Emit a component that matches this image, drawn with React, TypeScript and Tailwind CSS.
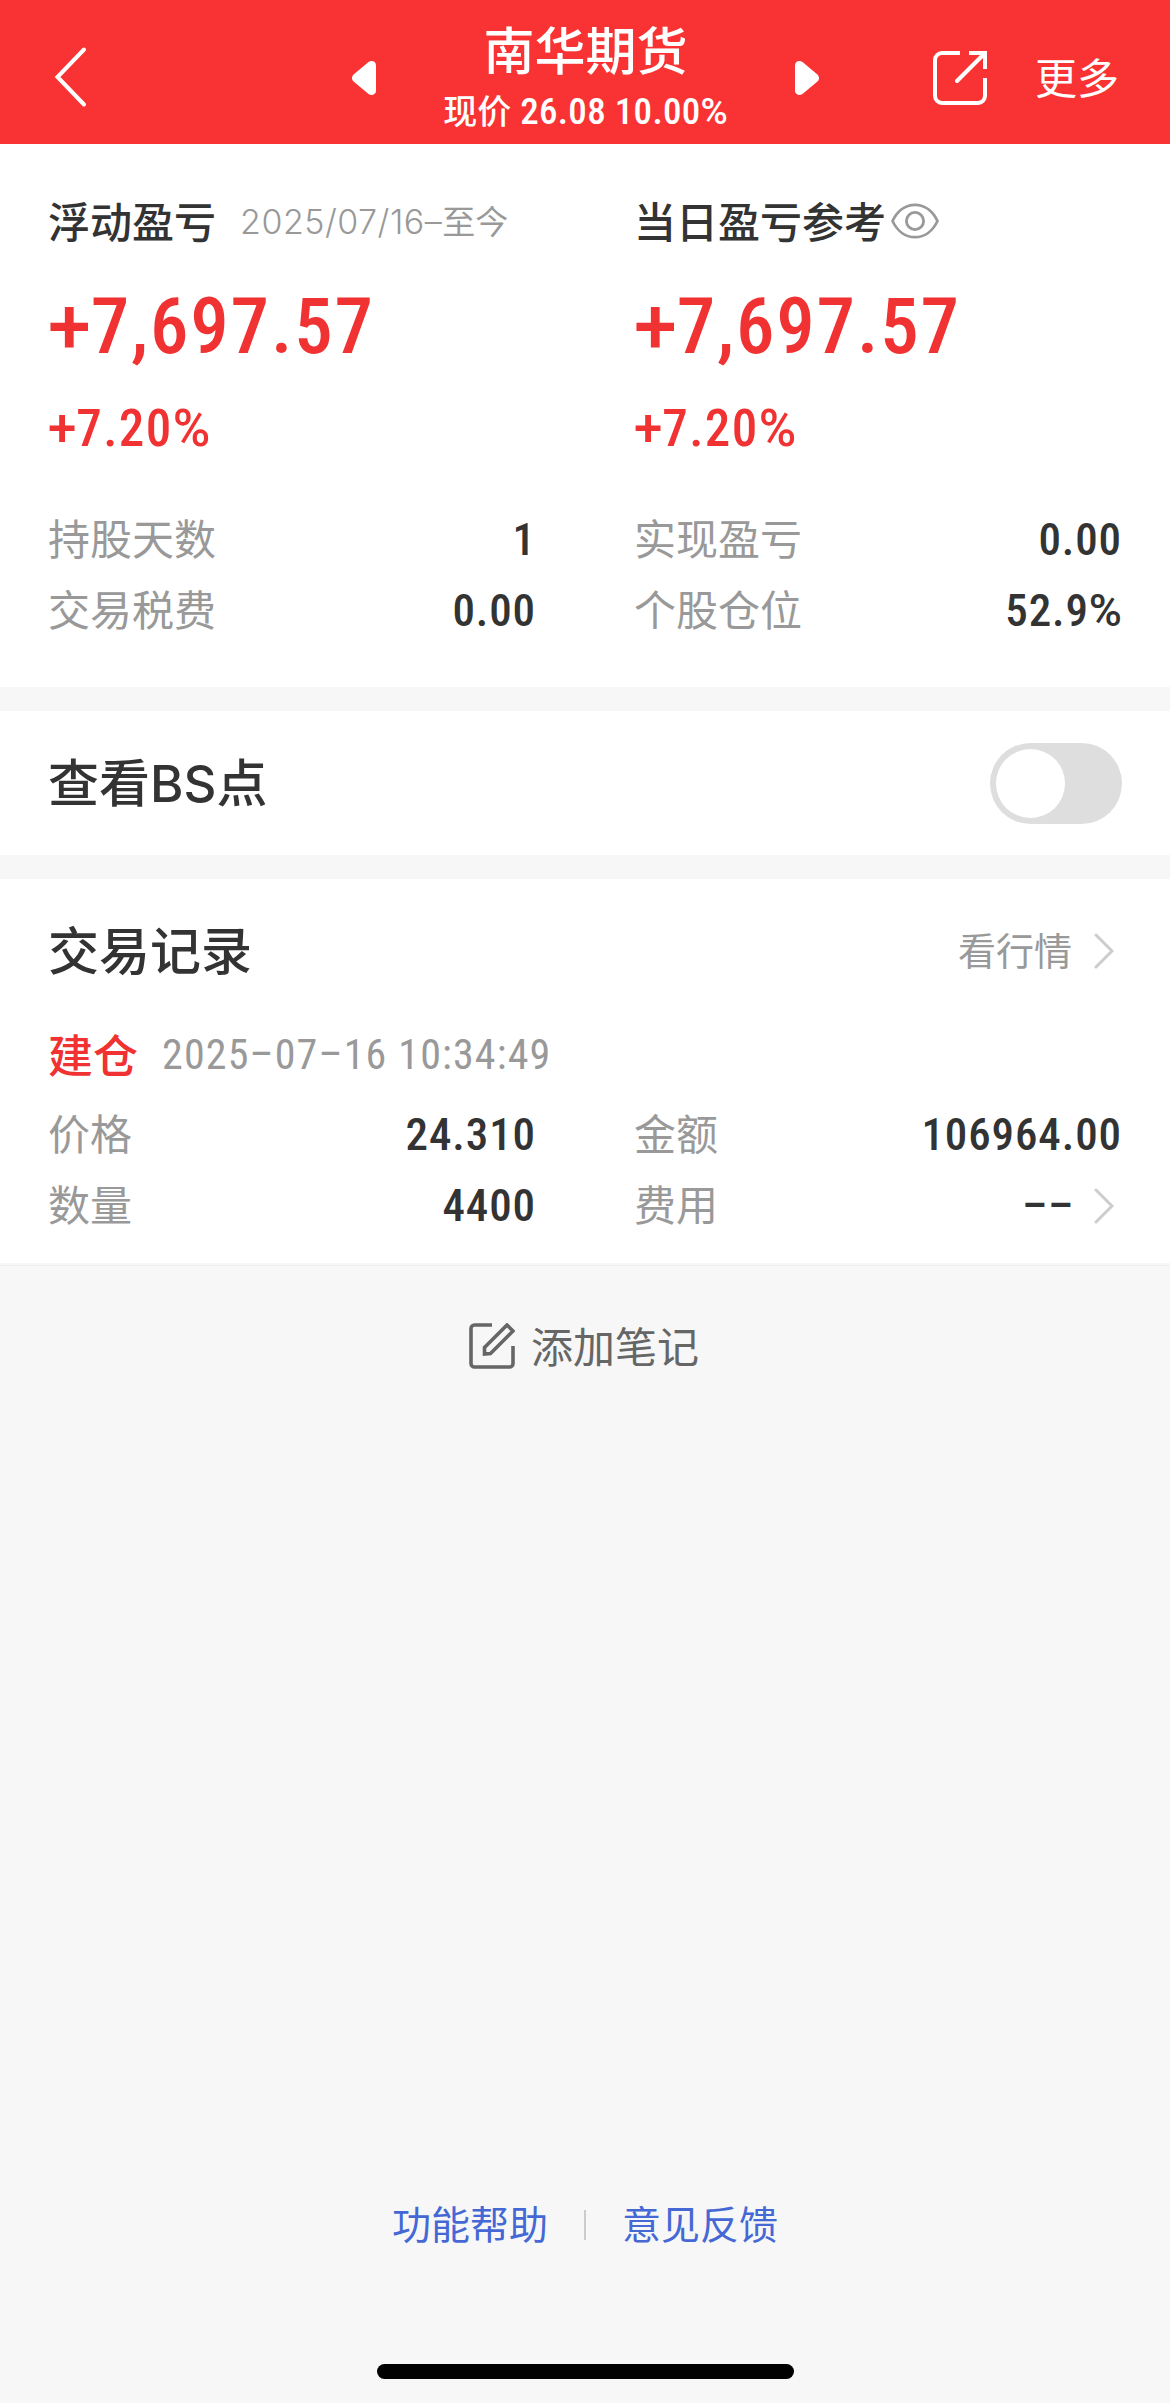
import React from 'react';

const cjk = "font-['Noto_Sans_CJK_SC',sans-serif] leading-none whitespace-nowrap";
const num = "font-['Roboto',sans-serif] font-stretch-75% leading-none whitespace-nowrap";

/** Condensed figures whose plus and percent signs keep their normal width. */
function Num({ children, className }: { children: string; className: string }) {
  return (
    <span className={`${num} ${className}`}>
      {children.split(/([+%])/).filter(Boolean).map((part, i) =>
        part === '+' || part === '%' ? <span key={i} className="font-stretch-100% tracking-normal">{part}</span> : part,
      )}
    </span>
  );
}

function BackIcon() {
  return (
    <svg width="34" height="62" viewBox="0 0 34 62" fill="none" stroke="#fff" strokeWidth="4" strokeLinecap="round" strokeLinejoin="miter">
      <path d="M31 3.5 4.5 31 31 58.5" />
    </svg>
  );
}

function Triangle({ flip = false }: { flip?: boolean }) {
  return (
    <svg width="24" height="34" viewBox="0 0 24 34" fill="#fff" className={flip ? 'rotate-180' : ''}>
      <path d="M1.600 13.400 16.500 1C19.500-1 24 .2 24 4.500V29.500C24 33.800 19.500 35 16.500 33L1.600 20.600C-.5 18.800-.5 15.200 1.600 13.400Z" />
    </svg>
  );
}

function ShareIcon() {
  return (
    <svg width="54" height="54" viewBox="0 0 54 54" fill="none" stroke="#fff" strokeWidth="4">
      <path d="M27 2H9a7 7 0 0 0-7 7v36a7 7 0 0 0 7 7h36a7 7 0 0 0 7-7V27" />
      <path d="M36 2h16v16" />
      <path d="M51 3 24 30" strokeLinecap="round" />
    </svg>
  );
}

function EyeIcon() {
  return (
    <svg width="48" height="36" viewBox="0 0 48 36" fill="none" stroke="#999" strokeWidth="2.8">
      <path d="M1.5 18C6 8.500 14 1.800 24 1.800S42 8.500 46.500 18C42 27.500 34 34.200 24 34.200S6 27.500 1.500 18Z" strokeLinejoin="round" />
      <circle cx="24" cy="18" r="8.6" />
    </svg>
  );
}

function Chevron() {
  return (
    <svg width="20" height="36" viewBox="0 0 20 36" fill="none" stroke="#ccc" strokeWidth="3" strokeLinecap="round">
      <path d="M2 2 18 18 2 34" />
    </svg>
  );
}

function NoteIcon() {
  return (
    <svg width="46" height="46" viewBox="0 0 46 46" fill="none" stroke="#666" strokeWidth="3.6">
      <path d="M23 2H5.500A3.500 3.500 0 0 0 2 5.500v35A3.500 3.500 0 0 0 5.500 44h35a3.500 3.500 0 0 0 3.500-3.500V23" />
      <path d="M15.500 31v-6.500L38 2l6 6-22.500 22.500Z" />
    </svg>
  );
}

function Stat({ label, value, more = false }: { label: string; value: string; more?: boolean }) {
  return (
    <div className="flex h-[71px] items-center justify-between">
      <span className={`${cjk} pb-[5px] text-[42px] text-[#999]`}>{label}</span>
      <span className="flex items-center">
        <Num className="text-[45px] font-medium tracking-[0.9px] text-[#333]">{value}</Num>
        {more && <span className="mr-2 ml-5"><Chevron /></span>}
      </span>
    </div>
  );
}

function Profit({ title, stats, children }: { title: string; stats: [string, string][]; children: React.ReactNode }) {
  return (
    <div>
      <div className="flex h-12 items-center">
        <h2 className={`${cjk} pt-px text-[42px] font-medium text-[#333]`}>{title}</h2>
        {children}
      </div>
      <div className="mt-10 flex h-[88px] items-center">
        <Num className="text-[77px] font-medium tracking-[1.8px] text-[#f03232]">+7,697.57</Num>
      </div>
      <div className="mt-[27px] mb-[46px] flex h-[60px] items-center">
        <Num className="text-[51px] font-medium tracking-[1.4px] text-[#f03232]">+7.20%</Num>
      </div>
      {stats.map(([l, v]) => <Stat key={l} label={l} value={v} />)}
    </div>
  );
}

export default function App() {
  return (
    <div className="flex h-[2403px] w-[1170px] flex-col bg-[#f7f7f7]">
      <header className="flex h-36 shrink-0 items-center bg-[#f93333] pt-3 text-white">
        <div className="w-[352px] pb-0.5 pl-[53px]"><BackIcon /></div>
        <Triangle />
        <div className="flex flex-1 flex-col items-center pb-1">
          <h1 className={`${cjk} text-[51px] font-medium`}>南华期货</h1>
          <p className="mt-[19px] flex items-baseline gap-[9px]">
            <span className={`${cjk} text-[34px] font-medium`}>现价</span>
            <Num className="text-[37px] font-medium tracking-[0.3px]">26.08 10.00%</Num>
          </p>
        </div>
        <Triangle flip />
        <div className="flex w-[351px] items-center pl-[114px]">
          <ShareIcon />
          <span className={`${cjk} ml-12 pb-1 text-[42px]`}>更多</span>
        </div>
      </header>

      <section className="grid h-[543px] shrink-0 grid-cols-2 gap-x-[98px] bg-white px-12 pt-[51px]">
        <Profit title="浮动盈亏" stats={[['持股天数', '1'], ['交易税费', '0.00']]}>
          <span className="ml-6 flex items-baseline pt-1 text-[#999]">
            <span className="font-['Inter',sans-serif] text-[34px] leading-none font-light tracking-[0.5px]">2025/07/16–</span>
            <span className={`${cjk} text-[33px]`}>至今</span>
          </span>
        </Profit>
        <Profit title="当日盈亏参考" stats={[['实现盈亏', '0.00'], ['个股仓位', '52.9%']]}>
          <span className="ml-[5px] pt-1"><EyeIcon /></span>
        </Profit>
      </section>

      <section className="mt-6 flex h-36 shrink-0 items-center justify-between bg-white px-12">
        <h2 className={`${cjk} pb-0.5 text-[51px] font-medium text-[#333]`}>
          查看<span className="font-['Inter',sans-serif]">BS</span>点
        </h2>
        <button role="switch" aria-checked="false" aria-label="查看BS点" className="flex h-[81px] w-[132px] items-center rounded-full bg-[#dedede] pl-1.5">
          <span className="size-[69px] rounded-full bg-white" />
        </button>
      </section>

      <section className="mt-6 h-[384px] shrink-0 bg-white px-12">
        <div className="flex h-36 items-center justify-between">
          <h2 className={`${cjk} pb-1.5 text-[51px] font-medium text-[#333]`}>交易记录</h2>
          <div className="flex items-center">
            <span className={`${cjk} pb-1 text-[38px] text-[#999]`}>看行情</span>
            <span className="mr-2 ml-[22px]"><Chevron /></span>
          </div>
        </div>
        <div className="flex h-16 items-center">
          <span className={`${cjk} pb-1 text-[45px] font-medium text-[#f03232]`}>建仓</span>
          <Num className="ml-6 text-[42px] tracking-[1.15px] text-[#999]">2025–07–16 10:34:49</Num>
        </div>
        <div className="mt-3 grid grid-cols-2 gap-x-[98px]">
          <Stat label="价格" value="24.310" />
          <Stat label="金额" value="106964.00" />
          <Stat label="数量" value="4400" />
          <Stat label="费用" value="––" more />
        </div>
      </section>
      <div className="mt-0.5 h-px shrink-0 bg-[#efefef]" />

      <button className="flex h-[160px] shrink-0 items-center justify-center gap-4 pr-0.5 text-[#666]">
        <NoteIcon />
        <span className={`${cjk} pb-0.5 text-[42px]`}>添加笔记</span>
      </button>

      <footer className="mt-auto flex flex-col items-center">
        <div className="flex items-center gap-9 text-[#4568d4]">
          <a className={`${cjk} pb-1 text-[39px]`}>功能帮助</a>
          <span className="h-[30px] w-0.5 bg-[#ccc]" />
          <a className={`${cjk} pb-1 text-[39px]`}>意见反馈</a>
        </div>
        <div className="mt-[118px] mb-6 h-[15px] w-[417px] rounded-full bg-black" />
      </footer>
    </div>
  );
}
